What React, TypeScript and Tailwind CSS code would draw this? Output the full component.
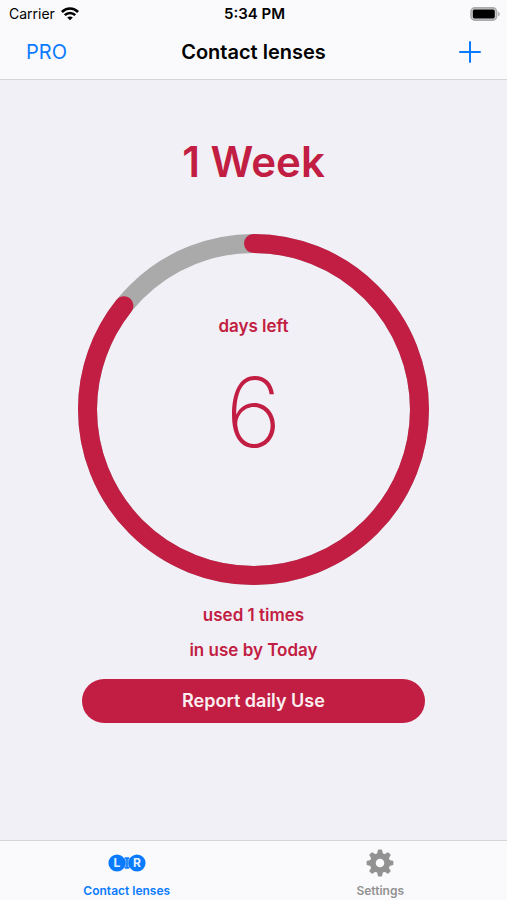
import React, { useState } from 'react';

const RING_RADIUS = 166;
const RING_LENGTH = 2 * Math.PI * RING_RADIUS;
const GEAR_ANGLES = [0, 45, 90, 135, 180, 225, 270, 315];

const WifiIcon: React.FC = () => (
  <svg width="18" height="14" viewBox="0 0 18 14" fill="none" stroke="#000" strokeWidth="2.6" aria-hidden="true">
    <path d="M0.9 5C5.4 0.4 12.6 0.4 17.1 5" />
    <path d="M3.8 8.2C6.7 5.3 11.3 5.3 14.2 8.2" />
    <path d="M9 13.3L6.2 10.5C7.8 9 10.2 9 11.8 10.5Z" fill="#000" stroke="none" />
  </svg>
);

const BatteryIcon: React.FC = () => (
  <svg width="30" height="14" viewBox="0 0 30 14" aria-hidden="true">
    <rect x="1" y="0.9" width="25.6" height="12.2" rx="3.8" fill="#d4d4d6" stroke="#aaaaac" strokeWidth="1.6" />
    <rect x="2.8" y="2.6" width="22" height="8.8" rx="1.6" fill="#000" />
    <path d="M28.2 4.6C30.2 5.4 30.2 8.6 28.2 9.4Z" fill="#aaaaac" />
  </svg>
);

const PlusIcon: React.FC = () => (
  <svg width="22" height="22" viewBox="0 0 22 22" stroke="currentColor" strokeWidth="2" strokeLinecap="round" aria-hidden="true">
    <path d="M11 1V21M1 11H21" />
  </svg>
);

const LensesIcon: React.FC = () => (
  <svg width="38" height="18" viewBox="0 0 38 18" aria-hidden="true">
    <rect x="14" y="4" width="10" height="10" fill="#0a7aff" opacity="0.55" />
    <path d="M16.8 4H21.2M16.8 14H21.2M19 4V14" stroke="#0a7aff" strokeWidth="1.4" />
    <circle cx="9" cy="9" r="8.6" fill="#0a7aff" />
    <circle cx="29" cy="9" r="8.6" fill="#0a7aff" />
    <g fill="#e4f1ff" fontFamily="Inter, sans-serif" fontWeight="700" fontSize="12" textAnchor="middle">
      <text x="9" y="13">L</text>
      <text x="29" y="13">R</text>
    </g>
  </svg>
);

const GearIcon: React.FC = () => (
  <svg width="28" height="28" viewBox="0 0 28 28" fill="none" aria-hidden="true">
    <circle cx="14" cy="14" r="7.2" stroke="currentColor" strokeWidth="5.8" />
    {GEAR_ANGLES.map((angle) => (
      <path
        key={angle}
        d="M10.8 6L11.8 1.5Q12 0.6 12.8 0.6H15.2Q16 0.6 16.2 1.5L17.2 6Z"
        fill="currentColor"
        transform={`rotate(${angle} 14 14)`}
      />
    ))}
  </svg>
);

const ProgressRing: React.FC<{ left: number; total: number }> = ({ left, total }) => (
  <div className="grid w-full">
    <svg viewBox="0 0 351 351" fill="none" strokeWidth="19" className="col-start-1 row-start-1 w-full" aria-hidden="true">
      <circle cx="175.5" cy="175.5" r={RING_RADIUS} stroke="#aaaaaa" />
      <circle
        cx="175.5"
        cy="175.5"
        r={RING_RADIUS}
        stroke="#c21d42"
        strokeLinecap="round"
        strokeDasharray={`${(RING_LENGTH * left) / total} ${RING_LENGTH}`}
        transform="rotate(-90 175.5 175.5)"
      />
    </svg>
    <div className="col-start-1 row-start-1 flex flex-col items-center pt-20">
      <p className="text-[17px] leading-6 font-semibold">days left</p>
      <p className="mt-[26px] text-[96px] leading-[96px] font-extralight">{left}</p>
    </div>
  </div>
);

const App: React.FC = () => {
  const [timesUsed, setTimesUsed] = useState(1);
  const [tab, setTab] = useState('lenses');

  const tabClass = (name: string) =>
    `flex flex-1 flex-col items-center pt-2 ${tab === name ? 'text-[#0a7aff]' : 'text-[#929292]'}`;

  return (
    <div className="flex min-h-screen flex-col bg-[#f1f0f6] font-[Inter,sans-serif] text-black">
      <header className="border-b border-[#d6d6da] bg-[#fafafc]">
        <div className="grid h-7 grid-cols-3 items-center pr-[7px] pl-[9px] text-sm">
          <div className="flex items-center gap-[6px]">
            <span>Carrier</span>
            <WifiIcon />
          </div>
          <span className="text-center text-[15px] font-semibold">5:34 PM</span>
          <div className="flex justify-end">
            <BatteryIcon />
          </div>
        </div>
        <div className="grid h-[51px] grid-cols-[1fr_auto_1fr] items-center px-[26px] pb-[3px]">
          <button type="button" className="justify-self-start text-xl text-[#0a7aff]">PRO</button>
          <h1 className="text-xl font-semibold">Contact lenses</h1>
          <button type="button" aria-label="Add lenses" className="justify-self-end text-[#0a7aff]">
            <PlusIcon />
          </button>
        </div>
      </header>

      <main className="flex flex-1 flex-col items-center px-[78px] pt-[54px] text-[#c21d42]">
        <h2 className="text-[42px] leading-[56px] font-semibold">1 Week</h2>
        <div className="mt-11 w-full">
          <ProgressRing left={6} total={7} />
        </div>
        <p className="mt-[18px] text-[17px] leading-6 font-semibold">used {timesUsed} times</p>
        <p className="mt-[11px] text-[17px] leading-6 font-semibold">in use by Today</p>
        <div className="mt-[17px] w-full px-1">
          <button
            type="button"
            onClick={() => setTimesUsed((prev) => prev + 1)}
            className="h-11 w-full rounded-full bg-[#c21d42] text-lg font-semibold text-[#fbeff2]"
          >
            Report daily Use
          </button>
        </div>
      </main>

      <nav className="flex h-[60px] border-t border-[#d6d6da] bg-[#fafafc] text-xs font-semibold">
        <button type="button" onClick={() => setTab('lenses')} className={tabClass('lenses')}>
          <span className="flex h-7 items-center"><LensesIcon /></span>
          <span className="mt-[6px]">Contact lenses</span>
        </button>
        <button type="button" onClick={() => setTab('settings')} className={tabClass('settings')}>
          <span className="flex h-7 items-center"><GearIcon /></span>
          <span className="mt-[6px]">Settings</span>
        </button>
      </nav>
    </div>
  );
};

export default App;
